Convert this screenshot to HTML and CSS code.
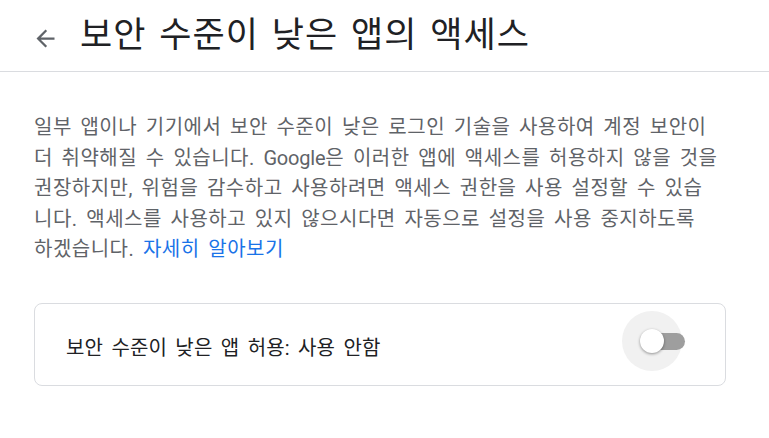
FILE: index.html
```html
<!DOCTYPE html>
<html lang="ko">
<head>
<meta charset="utf-8">
<title>보안 수준이 낮은 앱의 액세스</title>
<link rel="stylesheet" href="styles.css">
</head>
<body>
<header class="header">
  <button class="back" aria-label="뒤로">
    <svg viewBox="0 0 24 24" width="27" height="27"><path d="M20 11H7.83l5.59-5.59L12 4l-8 8 8 8 1.41-1.41L7.83 13H20v-2z" fill="#5f6368"/></svg>
  </button>
  <h1 class="title">보안 수준이 낮은 앱의 액세스</h1>
</header>
<main class="content">
  <p class="desc">일부 앱이나 기기에서 보안 수준이 낮은 로그인 기술을 사용하여 계정 보안이 더 취약해질 수 있습니다. <span class="brand">Google</span>은 이러한 앱에 액세스를 허용하지 않을 것을 권장하지만, 위험을 감수하고 사용하려면 액세스 권한을 사용 설정할 수 있습니다. 액세스를 사용하고 있지 않으시다면 자동으로 설정을 사용 중지하도록 하겠습니다. <a class="link" href="#">자세히 알아보기</a></p>
  <div class="card">
    <span class="card-label">보안 수준이 낮은 앱 허용: 사용 안함</span>
    <div class="switch" role="switch" aria-checked="false">
      <span class="halo"></span>
      <span class="track"></span>
      <span class="knob"></span>
    </div>
  </div>
</main>
</body>
</html>
```
FILE: styles.css
```css
html, body {
  margin: 0;
  padding: 0;
  background: #ffffff;
}
body {
  font-family: Roboto, "Noto Sans CJK KR", sans-serif;
  color: #202124;
  word-spacing: 0.2em;
}
.header {
  height: 72px;
  box-sizing: border-box;
  border-bottom: 1px solid #dadce0;
  display: flex;
  align-items: center;
  padding-left: 31.5px;
}
.back {
  width: 27px;
  height: 27px;
  padding: 0;
  border: 0;
  background: none;
  display: flex;
  margin-top: 6px;
}
.title {
  margin: 0 0 0 21.5px;
  font-size: 35px;
  font-weight: 400;
  letter-spacing: 1px;
  color: #202124;
  line-height: 44px;
}
.content {
  padding: 40px 0 0 34px;
  width: 692px;
}
.desc {
  margin: 0;
  width: 685px;
  font-size: 20px;
  letter-spacing: 0.5px;
  line-height: 30.5px;
  color: #5f6368;
}
.brand {
  letter-spacing: -0.2px;
}
.link {
  color: #1a73e8;
  text-decoration: none;
}
.card {
  margin-top: 38px;
  height: 83px;
  box-sizing: border-box;
  border: 1px solid #dadce0;
  border-radius: 8px;
  display: flex;
  align-items: center;
  justify-content: space-between;
  padding: 0 40px 0 31px;
}
.card-label {
  font-size: 20px;
  letter-spacing: 0.15px;
  color: #202124;
  margin-top: 5px;
}
.switch {
  position: relative;
  width: 45px;
  height: 60px;
  margin-top: -7px;
}
.halo {
  position: absolute;
  left: -18px;
  top: 0;
  width: 60px;
  height: 60px;
  border-radius: 50%;
  background: #f1f1f1;
}
.track {
  position: absolute;
  left: 9px;
  top: 22px;
  width: 36px;
  height: 17px;
  border-radius: 9px;
  background: #9e9e9e;
}
.knob {
  position: absolute;
  left: 0;
  top: 18px;
  width: 24px;
  height: 24px;
  border-radius: 50%;
  background: #ffffff;
  box-shadow: 0 1px 3px rgba(0,0,0,0.4);
}
```
